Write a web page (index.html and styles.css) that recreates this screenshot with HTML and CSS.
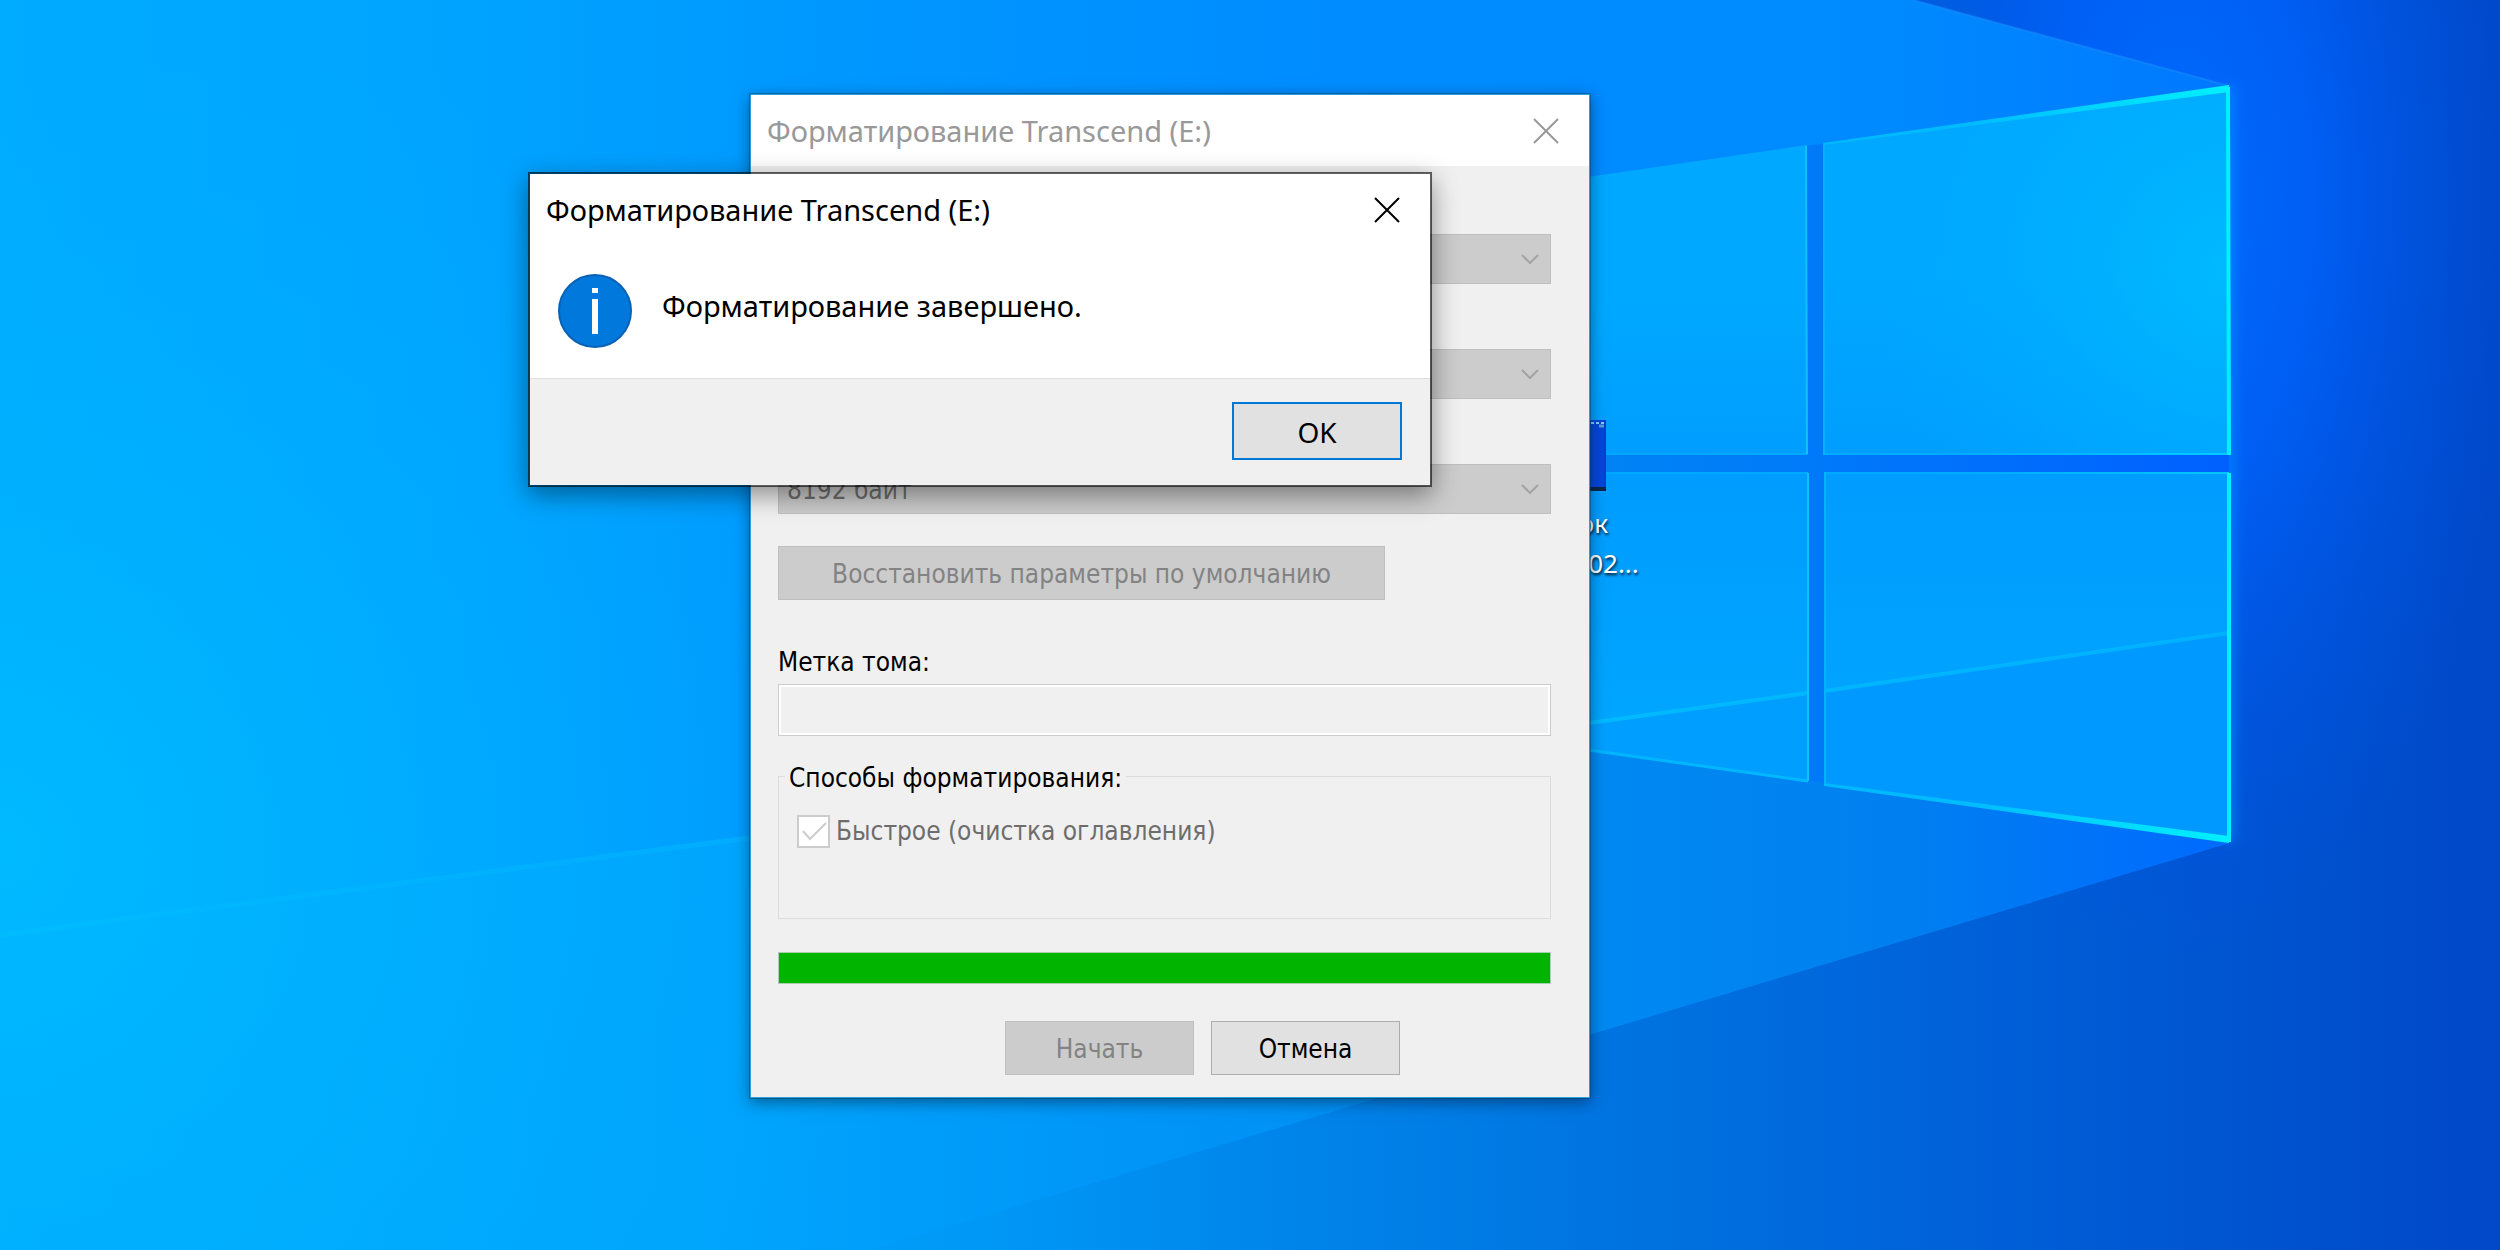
FILE: index.html
```html
<!DOCTYPE html>
<html lang="ru">
<head>
<meta charset="utf-8">
<meta name="viewport" content="width=device-width, initial-scale=1">
<title>Форматирование Transcend (E:)</title>
<link rel="stylesheet" href="styles.css">
</head>
<body>
<main class="desktop">
  <svg class="wallpaper" viewBox="0 0 2500 1250" preserveAspectRatio="xMidYMid slice" aria-hidden="true">
    <defs>
      <linearGradient id="night" x1="0" y1="0" x2="1" y2="0">
        <stop offset="0.3" stop-color="#00a2fb"/>
        <stop offset="0.4" stop-color="#0097f5"/>
        <stop offset="0.5" stop-color="#0087ec"/>
        <stop offset="0.62" stop-color="#0077e2"/>
        <stop offset="0.8" stop-color="#005fd8"/>
        <stop offset="1" stop-color="#0048c8"/>
      </linearGradient>
      <radialGradient id="glow" gradientUnits="userSpaceOnUse" cx="2180" cy="200" r="760" gradientTransform="translate(2180 200) scale(0.46 1) translate(-2180 -200)">
        <stop offset="0" stop-color="#006cff"/>
        <stop offset="0.4" stop-color="#0060fa" stop-opacity="0.85"/>
        <stop offset="0.7" stop-color="#0056ec" stop-opacity="0.45"/>
        <stop offset="1" stop-color="#0050e0" stop-opacity="0"/>
      </radialGradient>
      <linearGradient id="cone" x1="0" y1="0" x2="1" y2="0">
        <stop offset="0" stop-color="#00acff"/>
        <stop offset="0.2" stop-color="#00a4ff"/>
        <stop offset="0.4" stop-color="#0096ff"/>
        <stop offset="0.6" stop-color="#008cff"/>
        <stop offset="0.85" stop-color="#008aff"/>
        <stop offset="1" stop-color="#0078ff"/>
      </linearGradient>
      <radialGradient id="left" gradientUnits="userSpaceOnUse" cx="0" cy="850" r="900">
        <stop offset="0" stop-color="#00baff"/>
        <stop offset="1" stop-color="#00aaff" stop-opacity="0"/>
      </radialGradient>
      <linearGradient id="under" gradientUnits="userSpaceOnUse" x1="0" y1="0" x2="2229" y2="0">
        <stop offset="0" stop-color="#00b0ff" stop-opacity="0.6"/>
        <stop offset="0.34" stop-color="#00a3fc"/>
        <stop offset="0.5" stop-color="#0096f8"/>
        <stop offset="0.7" stop-color="#008af2"/>
        <stop offset="0.85" stop-color="#0080f0"/>
        <stop offset="1" stop-color="#006aff"/>
      </linearGradient>
      <linearGradient id="paneTop" x1="0" y1="0" x2="0" y2="1">
        <stop offset="0" stop-color="#00a8ff"/>
        <stop offset="0.5" stop-color="#00a8ff"/>
        <stop offset="1" stop-color="#009eff"/>
      </linearGradient>
      <radialGradient id="paneShine" gradientUnits="userSpaceOnUse" cx="2230" cy="270" r="360">
        <stop offset="0" stop-color="#00baff"/>
        <stop offset="1" stop-color="#00acff" stop-opacity="0"/>
      </radialGradient>
      <linearGradient id="paneLow" x1="0" y1="0" x2="0" y2="1">
        <stop offset="0" stop-color="#009cff"/>
        <stop offset="1" stop-color="#00a8ff"/>
      </linearGradient>
      <linearGradient id="bar" gradientUnits="userSpaceOnUse" x1="1590" y1="0" x2="2230" y2="0">
        <stop offset="0" stop-color="#0084f4"/>
        <stop offset="0.4" stop-color="#0078fa"/>
        <stop offset="1" stop-color="#0060ff"/>
      </linearGradient>
      <linearGradient id="edge" gradientUnits="userSpaceOnUse" x1="1590" y1="0" x2="2230" y2="0">
        <stop offset="0" stop-color="#00b4ff"/>
        <stop offset="0.6" stop-color="#00bcff"/>
        <stop offset="1" stop-color="#00f0ff"/>
      </linearGradient>
      <linearGradient id="beam" gradientUnits="userSpaceOnUse" x1="1590" y1="0" x2="2230" y2="0">
        <stop offset="0" stop-color="#00c0ff"/>
        <stop offset="1" stop-color="#00b6ff"/>
      </linearGradient>
      <linearGradient id="ray" gradientUnits="userSpaceOnUse" x1="0" y1="0" x2="750" y2="0">
        <stop offset="0" stop-color="#00bdff"/>
        <stop offset="1" stop-color="#00aeff"/>
      </linearGradient>
      <filter id="soft" filterUnits="userSpaceOnUse" x="2150" y="40" width="160" height="860"><feGaussianBlur stdDeviation="6"/></filter>
    </defs>
    <rect width="2500" height="1250" fill="url(#night)"/>
    <rect x="1500" width="1000" height="1250" fill="url(#glow)"/>
    <path d="M0 0H1913L2229 86V843L870 1250H0Z" fill="url(#cone)"/>
    <path d="M0 935L1590 723L2229 640V843L870 1250H0Z" fill="url(#under)"/>
    <rect width="1000" height="1250" fill="url(#left)"/>
    <path d="M0 935L750 838" stroke="url(#ray)" stroke-width="5" opacity="0.8"/>
    <path d="M1913 0L2229 86" stroke="#1a90ff" stroke-width="2" opacity="0.5"/>
    <path d="M2229 86V841" stroke="#0090ff" stroke-width="12" opacity="0.6" filter="url(#soft)"/>

    <path d="M1560 181L2229 86V841L1560 745Z" fill="url(#bar)"/>
    <path d="M1560 181L1807 145V455H1560Z" fill="url(#paneTop)"/>
    <path d="M1823 143L2229 86V455H1824Z" fill="url(#paneTop)"/>
    <path d="M1823 143L2229 86V455H1824Z" fill="url(#paneShine)"/>
    <path d="M1560 472H1808V782L1560 745Z" fill="url(#paneLow)"/>
    <path d="M1825 472H2229V841L1824 784Z" fill="url(#paneLow)"/>
    <path d="M1560 727L1808 693V782L1560 745Z" fill="#009fff"/>
    <path d="M1824 691L2229 633V841L1824 784Z" fill="#0099ff"/>

    <g fill="none" stroke="url(#edge)">
      <path d="M1560 727L1808 693M1824 691L2229 633" stroke="url(#beam)" stroke-width="4" opacity="0.8"/>
      <path d="M1560 746L1808 781" stroke-width="3"/>
      <path d="M1825 472V783M1824 144V455" stroke="#00b4ff" stroke-width="2"/>
      <path d="M1824 454H2229M1824 473H2229M1560 454H1808M1560 473H1808" stroke-width="2" opacity="0.5"/>
    </g>
    <path d="M1806 146L1807 454M1808 473V781" fill="none" stroke="#10c0ff" stroke-width="2"/>
    <path d="M1824 143L2229 85V92L1824 145ZM1824 783L2229 836V843L1824 786Z" fill="url(#edge)"/>
    <path d="M2228 87L2229 455M2229 473V842" fill="none" stroke="#00f0ff" stroke-width="4"/>
  </svg>

  <figure class="shortcut">
    <svg class="shortcut-thumb" viewBox="0 0 93 71" aria-hidden="true">
      <rect width="93" height="71" fill="#0040d4"/>
      <rect x="58" width="33" height="67" fill="#0a4be0" opacity="0.5"/>
      <rect y="67" width="93" height="4" fill="#0c2748"/>
      <path d="M78 3h3M83 3h3M88 3h3" stroke="#7fd0ff" stroke-width="2"/>
      <path d="M86 6h5" stroke="#5a9ad8" stroke-width="3"/>
    </svg>
    <figcaption class="shortcut-name">Снимок<br>экрана 202...</figcaption>
  </figure>

  <section class="window format-window" aria-labelledby="format-title">
    <header class="titlebar titlebar-inactive">
      <h1 class="title" id="format-title">Форматирование Transcend (E:)</h1>
      <button class="close" type="button" aria-label="Закрыть">
        <svg viewBox="0 0 26 26" class="close-icon"><path d="M1 1L25 25M25 1L1 25"/></svg>
      </button>
    </header>
    <form class="format-form">
      <div class="selects">
        <div class="select-box">
          <select aria-label="Емкость" disabled></select>
          <svg class="chevron" viewBox="0 0 18 10" aria-hidden="true"><path d="M1 1L9 9L17 1"/></svg>
        </div>
        <div class="select-box">
          <select aria-label="Файловая система" disabled></select>
          <svg class="chevron" viewBox="0 0 18 10" aria-hidden="true"><path d="M1 1L9 9L17 1"/></svg>
        </div>
        <div class="select-box">
          <select aria-label="Размер кластера" disabled><option>8192 байт</option></select>
          <svg class="chevron" viewBox="0 0 18 10" aria-hidden="true"><path d="M1 1L9 9L17 1"/></svg>
        </div>
      </div>
      <button class="button restore" type="button" disabled>Восстановить параметры по умолчанию</button>
      <div class="field">
        <label for="volume">Метка тома:</label>
        <input class="text-box" id="volume" type="text" disabled>
      </div>
      <fieldset class="methods">
        <legend>Способы форматирования:</legend>
        <div class="check-row">
          <span class="check-box">
            <input id="quick" type="checkbox" checked disabled>
            <svg class="tick" viewBox="0 0 33 33" aria-hidden="true"><path d="M6 16L13 24L29 8"/></svg>
          </span>
          <label for="quick">Быстрое (очистка оглавления)</label>
        </div>
      </fieldset>
      <progress class="progress" value="100" max="100" aria-label="Ход форматирования"></progress>
      <div class="actions">
        <button class="button" type="button" disabled>Начать</button>
        <button class="button" type="button">Отмена</button>
      </div>
    </form>
  </section>

  <section class="window message-window" role="dialog" aria-labelledby="message-title">
    <header class="titlebar">
      <h2 class="title" id="message-title">Форматирование Transcend (E:)</h2>
      <button class="close" type="button" aria-label="Закрыть">
        <svg viewBox="0 0 26 26" class="close-icon"><path d="M1 1L25 25M25 1L1 25"/></svg>
      </button>
    </header>
    <div class="message">
      <svg class="info" viewBox="0 0 74 74" aria-hidden="true">
        <circle cx="37" cy="37" r="36" fill="#0078dc" stroke="#0a62b4" stroke-width="2"/>
        <path d="M34 14h6v5h-6zM34 25h6v35h-6z" fill="#fff"/>
      </svg>
      <p class="message-text">Форматирование завершено.</p>
    </div>
    <footer class="message-footer">
      <button class="button ok" type="button">OK</button>
    </footer>
  </section>
</main>
</body>
</html>
```

FILE: styles.css
```css
* {
  box-sizing: border-box;
}

body {
  margin: 0;
  font: 26px/34px "DejaVu Sans Condensed", "DejaVu Sans", sans-serif;
  color: #000;
}

button,
input,
select {
  font: inherit;
  color: inherit;
}

.desktop {
  position: relative;
  min-height: 100vh;
  overflow: hidden;
  background: #0098ff;
}

.wallpaper {
  position: absolute;
  inset: 0;
  width: 100%;
  height: 100%;
}

/* Desktop shortcut */

.shortcut {
  position: absolute;
  top: 420px;
  left: 58.56%;
  display: flex;
  flex-direction: column;
  align-items: center;
  gap: 12px;
  width: 190px;
  margin: 0;
}

.shortcut-thumb {
  width: 93px;
  height: 71px;
}

.shortcut-name {
  font: 26px/40px "Noto Sans", sans-serif;
  color: #fff;
  text-align: center;
  white-space: nowrap;
  text-shadow: 1px 2px 3px rgba(0, 0, 0, 0.9);
}

/* Windows */

.window {
  position: absolute;
  background: #f0f0f0;
  background-clip: padding-box;
}

.format-window {
  top: 94px;
  left: 30%;
  width: 33.6%;
  border: 1px solid #2f9fd8;
  box-shadow: 0 0 0 1px rgba(0, 60, 90, 0.4), 0 4px 14px rgba(0, 20, 40, 0.5);
}

.message-window {
  top: 172px;
  left: 21.12%;
  width: 36.16%;
  border: 2px solid rgba(0, 0, 0, 0.6);
  box-shadow: 0 8px 24px rgba(0, 0, 0, 0.42);
}

.titlebar {
  display: flex;
  align-items: center;
  justify-content: space-between;
  height: 71px;
  padding: 0 30px 0 16px;
  background: #fff;
}

.titlebar-inactive {
  color: #999;
}

.title {
  margin: 0;
  font: 29px/40px "Noto Sans", sans-serif;
}

.close {
  display: flex;
  padding: 0;
  border: 0;
  background: none;
}

.close-icon {
  width: 26px;
  height: 26px;
  fill: none;
  stroke: currentColor;
  stroke-width: 2;
}

/* Format form */

.format-form {
  display: flex;
  flex-direction: column;
  padding: 68px 38px 22px 27px;
}

.selects {
  display: flex;
  flex-direction: column;
  gap: 65px;
}

.field {
  display: flex;
  flex-direction: column;
  gap: 5px;
  margin-top: 45px;
}

.select-box {
  position: relative;
}

select {
  display: block;
  width: 100%;
  height: 50px;
  padding: 2px 8px 0;
  appearance: none;
  border: 1px solid #bfbfbf;
  border-radius: 0;
  background: #ccc;
  color: #6d6d6d;
}

select:disabled {
  opacity: 1;
}

.chevron {
  position: absolute;
  top: 20px;
  right: 12px;
  width: 18px;
  height: 10px;
  fill: none;
  stroke: #a3a3a3;
  stroke-width: 2;
}

.button {
  height: 54px;
  padding: 1px 0 0;
  border: 1px solid #adadad;
  background: #e1e1e1;
}

.button:disabled {
  border-color: #bfbfbf;
  background: #ccc;
  color: #838383;
}

.restore {
  width: 607px;
  margin-top: 32px;
}

.text-box {
  height: 52px;
  padding: 0 8px;
  border: 1px solid #ccc;
  background: #f0f0f0;
  box-shadow: inset 0 0 0 2px #fff;
}

.methods {
  height: 162px;
  margin: 21px 0 0;
  padding: 19px 18px;
  border: 1px solid #dcdcdc;
}

.methods legend {
  margin-left: -12px;
  padding: 4px 4px 0;
}

.check-row {
  display: flex;
  align-items: center;
  gap: 6px;
  color: #6d6d6d;
}

.check-box {
  position: relative;
  width: 33px;
  height: 33px;
}

.check-box input {
  display: block;
  width: 33px;
  height: 33px;
  margin: 0;
  appearance: none;
  border: 2px solid #ccc;
  background: #fff;
}

.tick {
  position: absolute;
  inset: 0;
  fill: none;
  stroke: #ccc;
  stroke-width: 2;
}

.progress {
  width: 100%;
  height: 32px;
  margin-top: 33px;
  appearance: none;
  border: 1px solid #a8cfae;
  background: #e6e6e6;
}

.progress::-webkit-progress-bar {
  background: #e6e6e6;
}

.progress::-webkit-progress-value {
  background: #00b400;
}

.actions {
  display: flex;
  justify-content: flex-end;
  gap: 17px;
  margin-top: 37px;
  padding-right: 151px;
}

.actions .button {
  width: 189px;
}

/* Message dialog */

.message {
  display: flex;
  align-items: flex-start;
  gap: 30px;
  padding: 29px 28px 30px;
  background: #fff;
}

.info {
  flex: none;
  width: 74px;
  height: 74px;
}

.message-text {
  margin: 12px 0 0;
  font: 29px/40px "Noto Sans", sans-serif;
}

.message-footer {
  display: flex;
  justify-content: flex-end;
  padding: 23px 28px 25px;
  border-top: 1px solid #dfdfdf;
}

.ok {
  width: 170px;
  height: 58px;
  border: 2px solid #0078d7;
  font: 28px/40px "Noto Sans", sans-serif;
}
```
